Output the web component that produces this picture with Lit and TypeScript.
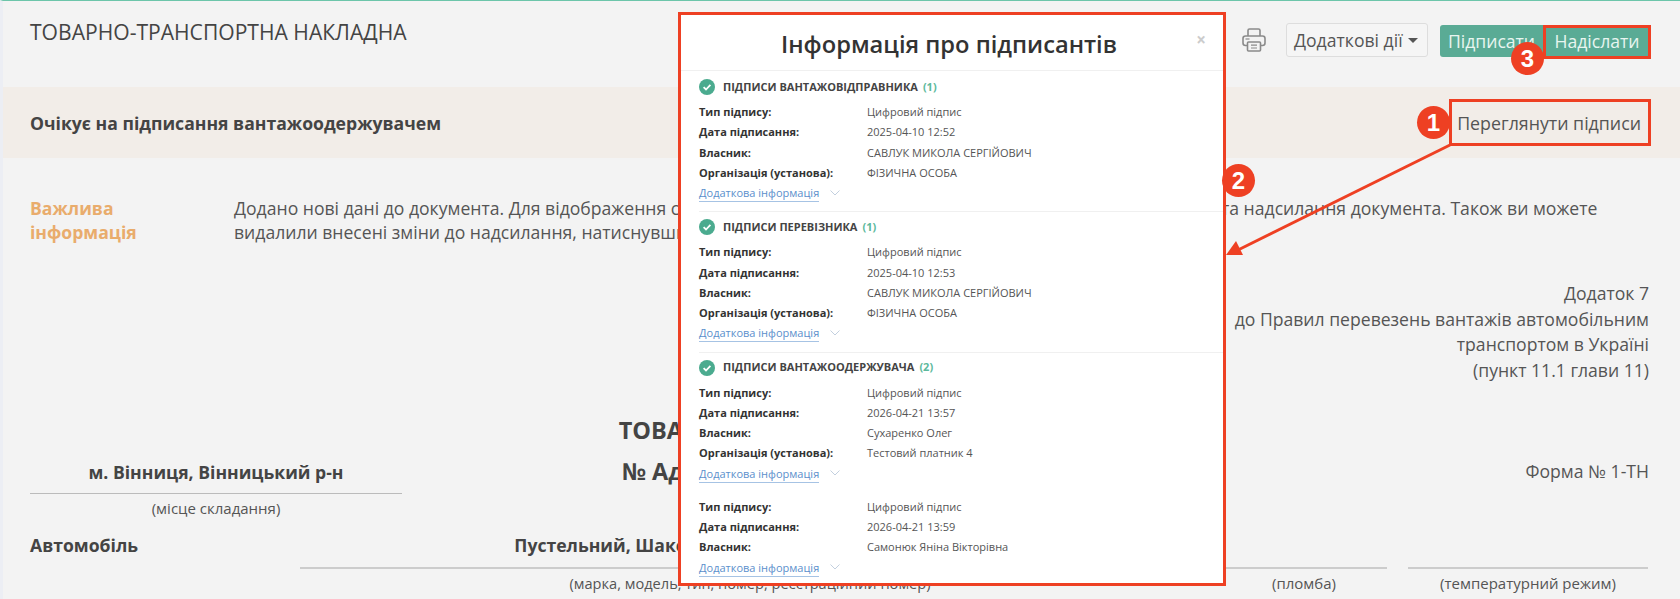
import { LitElement, html, css, svg } from "lit";
import { customElement } from "lit/decorators.js";

interface Signature {
  type: string;
  date: string;
  owner: string;
  org?: string;
}

interface Section {
  title: string;
  count: number;
  signatures: Signature[];
}

const SECTIONS: Section[] = [
  {
    title: "Підписи вантажовідправника",
    count: 1,
    signatures: [
      {
        type: "Цифровий підпис",
        date: "2025-04-10 12:52",
        owner: "САВЛУК МИКОЛА СЕРГІЙОВИЧ",
        org: "ФІЗИЧНА ОСОБА",
      },
    ],
  },
  {
    title: "Підписи перевізника",
    count: 1,
    signatures: [
      {
        type: "Цифровий підпис",
        date: "2025-04-10 12:53",
        owner: "САВЛУК МИКОЛА СЕРГІЙОВИЧ",
        org: "ФІЗИЧНА ОСОБА",
      },
    ],
  },
  {
    title: "Підписи вантажоодержувача",
    count: 2,
    signatures: [
      {
        type: "Цифровий підпис",
        date: "2026-04-21 13:57",
        owner: "Сухаренко Олег",
        org: "Тестовий платник 4",
      },
      {
        type: "Цифровий підпис",
        date: "2026-04-21 13:59",
        owner: "Самонюк Яніна Вікторівна",
      },
    ],
  },
];

const checkIcon = svg`<svg class="check" viewBox="0 0 16 16" width="16" height="16">
  <circle cx="8" cy="8" r="8" fill="#4bab8f"></circle>
  <path d="M4.6 8.2 7 10.5l4.4-4.6" fill="none" stroke="#fff" stroke-width="1.8"></path>
</svg>`;

const chevron = svg`<svg class="chevron" viewBox="0 0 10 6" width="10" height="6">
  <path d="M.5.5 5 5 9.5.5" fill="none" stroke="#c3d0df" stroke-width="1"></path>
</svg>`;

const printIcon = svg`<svg viewBox="0 0 24 24" width="24" height="24" fill="none" stroke="#8a8a8a" stroke-width="1.6">
  <path d="M6 8V2.5a1.5 1.5 0 0 1 1.5-1.5h9A1.5 1.5 0 0 1 18 2.5V8"></path>
  <rect x="1" y="8" width="22" height="9.5" rx="2.5"></rect>
  <path d="M3.5 11h4" stroke-width="1.2"></path>
  <rect x="5.5" y="14" width="13" height="9" rx="1" fill="#f3f3f3"></rect>
  <path d="M9 17.2h6M9 20h6" stroke-width="1.2"></path>
</svg>`;

@customElement("app-root")
export class AppRoot extends LitElement {
  static styles = css`
    :host {
      display: block;
      position: relative;
      width: 1680px;
      height: 599px;
      overflow: hidden;
      box-sizing: border-box;
      background: #f3f3f3;
      border-top: 1px solid #6cc5aa;
      border-left: 3px solid #eceef4;
      font-family: "Open Sans", sans-serif;
      font-size: 17.6px;
      line-height: 24px;
      color: #555;
    }

    .header {
      display: flex;
      align-items: flex-start;
      height: 86px;
      padding: 19px 29px 0 27px;
      box-sizing: border-box;
    }
    .title {
      flex: 1;
      font-size: 21.1px;
      color: #444;
      line-height: 24px;
    }
    .actions {
      display: flex;
      align-items: flex-start;
      margin-top: 3px;
    }
    .print {
      display: flex;
      margin: 5px 20px 0 0;
    }
    .more {
      display: flex;
      align-items: center;
      gap: 5px;
      width: 142px;
      height: 34px;
      box-sizing: border-box;
      padding-left: 7px;
      margin-right: 12px;
      background: #f5f5f5;
      border: 1px solid #ddd;
      border-radius: 3px;
    }
    .caret {
      width: 0;
      height: 0;
      border: 5px solid transparent;
      border-top: 5px solid #555;
      border-bottom: 0;
    }
    .btn {
      height: 32px;
      margin-top: 2px;
      display: flex;
      align-items: center;
      justify-content: center;
      background: #5aab95;
      color: #e8f5f0;
    }
    .btn.sign {
      width: 103px;
      border-radius: 3px 0 0 3px;
    }
    .btn.send {
      width: 108px;
    }

    .banner {
      display: flex;
      justify-content: space-between;
      align-items: center;
      height: 71px;
      padding: 0 39px 0 27px;
      background: #f2ede8;
    }
    .banner b {
      font-weight: 700;
      color: #444;
    }
    .banner span {
      font-size: 17.8px;
    }

    .info {
      display: flex;
      padding: 38px 31px 0 27px;
    }
    .info-label {
      width: 204px;
      font-weight: 700;
      color: #e9ac6c;
    }
    .info-text {
      white-space: nowrap;
    }

    .annex {
      margin: 37px 31px 0 0;
      text-align: right;
      line-height: 25.6px;
    }

    .doc-head {
      display: grid;
      grid-template-columns: 372px 1fr 372px;
      padding: 0 31px 0 27px;
      margin-top: 27px;
    }
    .place {
      margin-top: 50px;
      text-align: center;
    }
    .place b {
      display: block;
      color: #444;
      padding-bottom: 9px;
      border-bottom: 1px solid #bbb;
    }
    .hint {
      font-size: 15px;
      line-height: 20px;
      padding-top: 4px;
      text-align: center;
    }
    .hint.narrow {
      font-size: 14.6px;
    }
    .doc-title {
      text-align: center;
      font-size: 23.5px;
      font-weight: 700;
      line-height: 41px;
      color: #444;
      white-space: nowrap;
    }
    .form-no {
      margin-top: 49px;
      text-align: right;
    }

    .car {
      display: flex;
      padding: 0 31px 0 27px;
      margin-top: 15px;
    }
    .car-label {
      width: 270px;
      font-weight: 700;
      color: #444;
    }
    .car-grid {
      flex: 1;
      display: grid;
      grid-template-columns: 900px 166px 240px;
      column-gap: 21px;
    }
    .car-value {
      font-weight: 700;
      color: #444;
      text-align: center;
      height: 36px;
      border-bottom: 2px solid #ccc;
      box-sizing: border-box;
      white-space: nowrap;
    }

    .modal {
      position: absolute;
      left: 675px;
      top: 11px;
      width: 548px;
      height: 574px;
      box-sizing: border-box;
      background: #fff;
      border: 3px solid #ee4023;
      overflow: hidden;
    }
    .modal-head {
      position: relative;
      height: 56px;
      padding-right: 6px;
      box-sizing: border-box;
      border-bottom: 1px solid #f0f0f0;
      text-align: center;
      font-size: 23.7px;
      font-weight: 600;
      line-height: 58px;
      color: #333;
    }
    .close {
      position: absolute;
      right: 17px;
      top: 15px;
      font-size: 17px;
      line-height: 20px;
      font-weight: 700;
      color: #ccc;
    }
    .section {
      position: relative;
      padding: 8px 0 0 18px;
      font-size: 11px;
      line-height: 20.3px;
      height: 140.3px;
      box-sizing: border-box;
    }
    .section + .section::before {
      content: "";
      position: absolute;
      left: 18px;
      right: 0;
      top: 0;
      height: 1px;
      background: #f0f0f0;
    }
    .sec-title {
      display: flex;
      align-items: center;
      height: 16px;
      margin-bottom: 7px;
      font-weight: 700;
      text-transform: uppercase;
      color: #444;
    }
    .check {
      margin-right: 8px;
    }
    .count {
      margin-left: 5px;
      color: #5cb99c;
    }
    .row {
      display: grid;
      grid-template-columns: 168px 1fr;
    }
    .row b {
      font-weight: 700;
      color: #333;
    }
    .more-link {
      display: flex;
      align-items: center;
      gap: 11px;
    }
    .more-link span {
      color: #5b8fcc;
      border-bottom: 1px solid #a6c3e4;
      line-height: 17px;
      margin-top: 1px;
    }
    .sig + .sig {
      margin-top: 14px;
    }

    .mark {
      position: absolute;
      box-sizing: border-box;
      border: 3px solid #ee4023;
    }
    .mark-view {
      left: 1446px;
      top: 98px;
      width: 202px;
      height: 47px;
    }
    .mark-send {
      left: 1540px;
      top: 24px;
      width: 108px;
      height: 34px;
    }
    .arrow {
      position: absolute;
      left: -3px;
      top: -1px;
    }
    .badge {
      position: absolute;
      width: 33px;
      height: 33px;
      border-radius: 50%;
      background: #ee4023;
      color: #fff;
      font-family: "Liberation Sans", sans-serif;
      font-size: 24px;
      font-weight: 700;
      line-height: 33px;
      text-align: center;
    }
    .badge-1 {
      left: 1414px;
      top: 105px;
    }
    .badge-2 {
      left: 1219px;
      top: 163px;
    }
    .badge-3 {
      left: 1508px;
      top: 41px;
    }
  `;

  private renderSignature(s: Signature) {
    return html`<div class="sig">
      <div class="row"><b>Тип підпису:</b><span>${s.type}</span></div>
      <div class="row"><b>Дата підписання:</b><span>${s.date}</span></div>
      <div class="row"><b>Власник:</b><span>${s.owner}</span></div>
      ${s.org
        ? html`<div class="row"><b>Організація (установа):</b><span>${s.org}</span></div>`
        : null}
      <div class="more-link"><span>Додаткова інформація</span>${chevron}</div>
    </div>`;
  }

  private renderModal() {
    return html`<div class="modal">
      <div class="modal-head">
        Інформація про підписантів
        <span class="close">×</span>
      </div>
      ${SECTIONS.map(
        (sec) => html`<div class="section">
          <div class="sec-title">
            ${checkIcon}${sec.title}<span class="count">(${sec.count})</span>
          </div>
          ${sec.signatures.map((s) => this.renderSignature(s))}
        </div>`
      )}
    </div>`;
  }

  render() {
    return html`
      <div class="header">
        <div class="title">ТОВАРНО-ТРАНСПОРТНА НАКЛАДНА</div>
        <div class="actions">
          <span class="print">${printIcon}</span>
          <div class="more">Додаткові дії<i class="caret"></i></div>
          <div class="btn sign">Підписати</div>
          <div class="btn send">Надіслати</div>
        </div>
      </div>
      <div class="banner">
        <b>Очікує на підписання вантажоодержувачем</b>
        <span>Переглянути підписи</span>
      </div>
      <div class="info">
        <div class="info-label">Важлива<br />інформація</div>
        <div class="info-text">
          Додано нові дані до документа. Для відображення скасуйте поточний підпис й повторіть процедуру підписування
          та надсилання документа. Також ви можете<br />
          видалили внесені зміни до надсилання, натиснувши кнопку
        </div>
      </div>
      <div class="annex">
        Додаток 7<br />
        до Правил перевезень вантажів автомобільним<br />
        транспортом в Україні<br />
        (пункт 11.1 глави 11)
      </div>
      <div class="doc-head">
        <div class="place">
          <b>м. Вінниця, Вінницький р-н</b>
          <div class="hint">(місце складання)</div>
        </div>
        <div class="doc-title">
          ТОВАРНО-ТРАНСПОРТНА НАКЛАДНА<br />
          № Ад-000001 від 10 квітня 2025 року
        </div>
        <div class="form-no">Форма № 1-ТН</div>
      </div>
      <div class="car">
        <div class="car-label">Автомобіль</div>
        <div class="car-grid">
          <div class="car-value">Пустельний, Шаковий, вантажний, АВ 0000 АА 000.</div>
          <div class="car-value"></div>
          <div class="car-value"></div>
          <div class="hint narrow">(марка, модель, тип, номер, реєстраційний номер)</div>
          <div class="hint">(пломба)</div>
          <div class="hint">(температурний режим)</div>
        </div>
      </div>
      ${this.renderModal()}
      <div class="mark mark-view"></div>
      <div class="mark mark-send"></div>
      <svg class="arrow" width="1680" height="599" viewBox="0 0 1680 599">
        <path d="M1450 145 1238 250" stroke="#ee4023" stroke-width="3" fill="none"></path>
        <path d="M1226 255 1236 241 1243 255Z" fill="#ee4023"></path>
      </svg>
      <div class="badge badge-1">1</div>
      <div class="badge badge-2">2</div>
      <div class="badge badge-3">3</div>
    `;
  }
}
